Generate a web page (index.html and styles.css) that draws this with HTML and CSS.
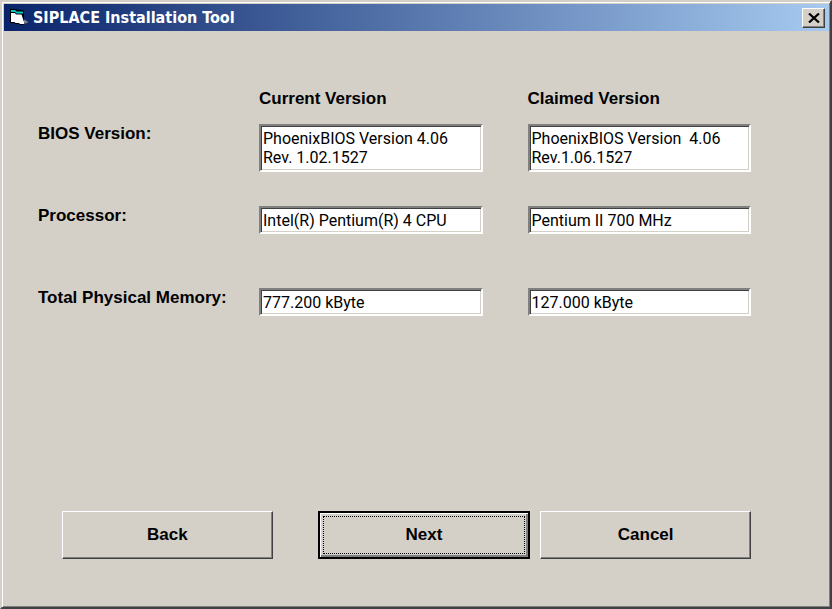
FILE: index.html
```html
<!DOCTYPE html>
<html lang="en">
<head>
  <meta charset="UTF-8">
  <meta name="viewport" content="width=device-width, initial-scale=1.0">
  <title>SIPLACE Installation Tool</title>
  <link rel="stylesheet" href="styles.css">
</head>
<body>
  <div class="window">
    <header class="title-bar">
      <svg class="app-icon" width="20" height="19" viewBox="0 0 20 19" aria-hidden="true">
        <path d="M15 11.5l4.5 2.5-2.500 1.500h-2.500z" fill="#808080"/>
        <path d="M1 1h6l2 1h5l1 1v13l-1 1h-3l-1-1H6l-1-1H1z" fill="#000"/>
        <path d="M2 2h4l1.500 1.500H14v2H7.500L6 4H2z" fill="#00c8c8"/>
        <path d="M2 5h4l1 1.500h5.500l2.500 7.500v2h-4l-1-1H6.500l-1-1H2z" fill="#fff"/>
      </svg>
      <h1>SIPLACE Installation Tool</h1>
      <button type="button" class="close" aria-label="Close">
        <svg width="12" height="10" viewBox="0 0 12 10" aria-hidden="true">
          <path d="M1 0.5l10 9M11 0.5l-10 9" stroke="#000" stroke-width="2.2"/>
        </svg>
      </button>
    </header>

    <form class="content">
      <div class="row row-head">
        <div class="fields">
          <h2 id="current">Current Version</h2>
          <h2 id="claimed">Claimed Version</h2>
        </div>
      </div>
      <div class="row row-tall">
        <label id="bios" for="bios-current">BIOS Version:</label>
        <div class="fields">
          <textarea id="bios-current" rows="2" readonly>PhoenixBIOS Version 4.06
Rev. 1.02.1527</textarea>
          <textarea rows="2" aria-labelledby="bios claimed" readonly>PhoenixBIOS Version  4.06
Rev.1.06.1527</textarea>
        </div>
      </div>
      <div class="row">
        <label id="cpu" for="cpu-current">Processor:</label>
        <div class="fields">
          <input type="text" id="cpu-current" value="Intel(R) Pentium(R) 4 CPU" readonly>
          <input type="text" aria-labelledby="cpu claimed" value="Pentium II 700 MHz" readonly>
        </div>
      </div>
      <div class="row">
        <label id="memory" for="memory-current">Total Physical Memory:</label>
        <div class="fields">
          <input type="text" id="memory-current" value="777.200 kByte" readonly>
          <input type="text" aria-labelledby="memory claimed" value="127.000 kByte" readonly>
        </div>
      </div>

      <div class="buttons">
        <button type="button" class="back">Back</button>
        <button type="button" class="next"><span>Next</span></button>
        <button type="button">Cancel</button>
      </div>
    </form>
  </div>
</body>
</html>
```

FILE: styles.css
```css
* {
  box-sizing: border-box;
}

body {
  margin: 0;
  background-color: #d4d0c8;
  color: #000;
  font-family: "Liberation Sans", Arial, sans-serif;
  font-size: 17px;
}

.window {
  display: flex;
  flex-direction: column;
  min-height: 100vh;
  padding: 2px 1px 1px 2px;
  border: 2px solid;
  border-color: #d4d0c8 #404040 #404040 #d4d0c8;
  box-shadow: inset 1px 1px #fff, inset -1px -1px #808080;
}

.title-bar {
  display: flex;
  align-items: center;
  height: 27px;
  padding: 0 4px 0 5px;
  background: linear-gradient(to right, #0a246a, #a6caf0);
}

.title-bar h1 {
  flex: 1;
  margin: 0 0 0 4px;
  color: #fff;
  font-family: "DejaVu Sans Condensed", "DejaVu Sans", sans-serif;
  font-size: 16px;
  line-height: 20px;
}

.close {
  display: flex;
  align-items: center;
  justify-content: center;
  width: 23px;
  height: 20px;
  padding: 0;
}

.content {
  display: flex;
  flex: 1;
  flex-direction: column;
  padding: 58px 78px 47px 34px;
}

.row {
  display: flex;
  height: 28px;
  margin-bottom: 54px;
}

.row-head {
  justify-content: flex-end;
  height: 20px;
  margin-bottom: 15px;
}

.row-tall {
  height: 48px;
  margin-bottom: 34px;
}

.row label {
  width: 221px;
  font-weight: bold;
  line-height: 20px;
  white-space: nowrap;
}

.fields {
  display: flex;
  flex: 1;
  gap: 45px;
}

.row-head .fields {
  margin-left: 221px;
}

.fields > * {
  flex: 1;
  min-width: 0;
}

.fields h2 {
  margin: 0;
  font-size: 17px;
  line-height: 20px;
}

.fields input,
.fields textarea {
  margin: 0;
  padding: 3px 2px;
  border: 2px solid;
  border-color: #808080 #fff #fff #808080;
  border-radius: 0;
  outline: none;
  background-color: #fff;
  box-shadow: inset 1px 1px #404040, inset -1px -1px #d4d0c8;
  color: #000;
  font: 16px/19px Roboto, "Liberation Sans", sans-serif;
  resize: none;
  overflow: hidden;
}

.buttons {
  display: flex;
  gap: 10px;
  margin-top: auto;
  padding-left: 24px;
}

button {
  border: 1px solid;
  border-color: #fff #404040 #404040 #fff;
  border-radius: 0;
  background-color: #d4d0c8;
  box-shadow: inset -1px -1px #808080;
  color: #000;
  font: bold 17px/20px "Liberation Sans", Arial, sans-serif;
}

.buttons button {
  flex: 1;
  height: 48px;
  padding: 3px;
}

.buttons .back {
  margin-right: 35px;
}

.buttons .next {
  border: 2px solid #000;
  box-shadow: inset 1px 1px #fff, inset -2px -2px #808080;
}

.next span {
  display: flex;
  align-items: center;
  justify-content: center;
  height: 100%;
  border: 1px dotted #000;
}
```
